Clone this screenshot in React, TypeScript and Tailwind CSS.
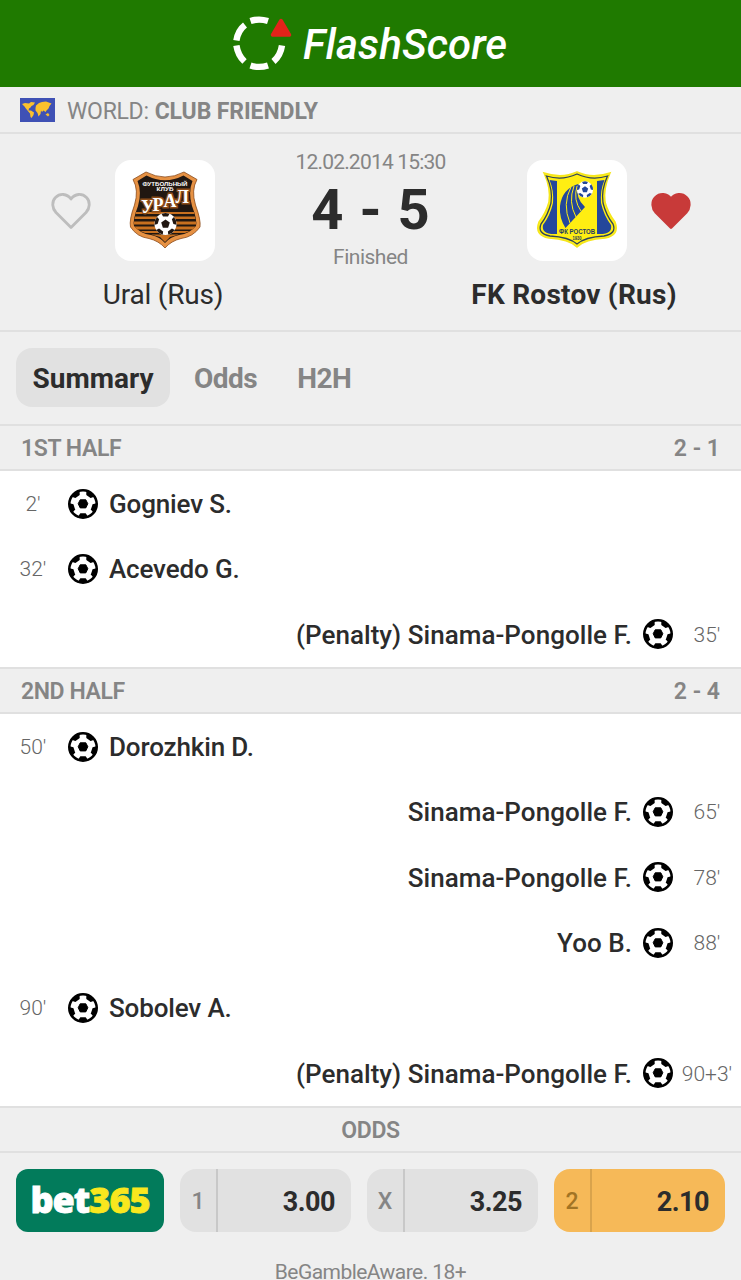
import type { ReactNode } from "react";

type Goal = {
  minute: string;
  player: string;
  side: "home" | "away";
};

const firstHalf: Goal[] = [
  { minute: "2'", player: "Gogniev S.", side: "home" },
  { minute: "32'", player: "Acevedo G.", side: "home" },
  { minute: "35'", player: "(Penalty) Sinama-Pongolle F.", side: "away" },
];

const secondHalf: Goal[] = [
  { minute: "50'", player: "Dorozhkin D.", side: "home" },
  { minute: "65'", player: "Sinama-Pongolle F.", side: "away" },
  { minute: "78'", player: "Sinama-Pongolle F.", side: "away" },
  { minute: "88'", player: "Yoo B.", side: "away" },
  { minute: "90'", player: "Sobolev A.", side: "home" },
  { minute: "90+3'", player: "(Penalty) Sinama-Pongolle F.", side: "away" },
];

const Logo = () => (
  <svg width="62" height="60" viewBox="0 0 62 60" className="shrink-0">
    <g fill="none" stroke="#fff" strokeWidth="6.4">
      <path d="M20.500 7Q29 4.200 38 7" />
      <path d="M15 11Q8 16.500 6.400 26.500" />
      <path d="M6.400 31.500Q8 41.500 14.500 47.500" />
      <path d="M20.500 51.500Q29 54.300 38 51.500" />
      <path d="M43.500 47.500Q50.500 41.500 52 31.500" />
    </g>
    <path d="M51 6.500L59.500 21H42.500Z" fill="#e2231a" stroke="#e2231a" strokeWidth="3.500" strokeLinejoin="round" />
  </svg>
);

const WorldFlag = () => (
  <svg width="35" height="24" viewBox="0 0 35 24" className="shrink-0">
    <path fill="#3f51b5" d="M0 0h35v24H0z" />
    <g fill="#fbc02d">
      <path d="M2 6L5 5 9 5.500 11 4 15 4.500 13.500 7 11.500 8 10.500 9.500 9 10.500 8.500 12.500 11 12.500 14 14.500 13.500 17 11.500 20 10.500 19 10 15.500 7.500 12.500 5.500 10 4.500 8.500Z" />
      <path d="M16 7.500L19 5 22 4 26 3.500 31.500 5.500 29.500 8 28.500 10.500 26.500 12.500 25.500 14 23.500 12.500 22 14 21 12.500 20.500 16 18.500 18.500 17.500 15 15.500 12.500 15.500 10Z" />
      <path d="M25.500 16.500L28 15 29.500 17 28 18.500Z" />
    </g>
  </svg>
);

const Ball = () => (
  <svg width="30" height="30" viewBox="-15 -15 30 30" className="shrink-0">
    <circle r="13.700" fill="#fff" stroke="#000" strokeWidth="2.600" />
    <path d="M-2.800-4.200H2.800L4.800-.3 2.800 3.900H-2.800L-4.800-.3Z" stroke="#000" strokeWidth="1" strokeLinejoin="round" />
    {[0, 72, 144, 216, 288].map((deg) => (
      <path key={deg} transform={`rotate(${deg})`} d="M-5.500 13.500L-3.200 10 -2.600 9.200H2.600L3.200 10 5.500 13.500Z" />
    ))}
  </svg>
);

const Heart = ({ active }: { active?: boolean }) => (
  <svg width="40" height="38" viewBox="0 0 40 38" className="shrink-0">
    <path
      d="M20 35.500L5 20.500C1 16 .5 9.500 4.500 5.500 9 1 16 1.500 20 7 24 1.500 31 1 35.500 5.500 39.500 9.500 39 16 35 20.500Z"
      fill={active ? "#c83a39" : "none"}
      stroke={active ? "#c83a39" : "#bdbdbd"}
      strokeWidth="2.800"
      strokeLinejoin="round"
    />
  </svg>
);

const CrestBall = ({ x, y, s, color }: { x: number; y: number; s: number; color: string }) => (
  <g transform={`translate(${x} ${y}) scale(${s})`}>
    <circle r="11" fill="#fff" />
    <g fill={color}>
      <path d="M0-4.500L4.300-1.400 2.600 3.700H-2.600L-4.300-1.400Z" />
      {[36, 108, 180, 252, 324].map((deg) => (
        <path key={deg} transform={`rotate(${deg})`} d="M-4 10.200L-2.500 7.500H2.500L4 10.200 0 11Z" />
      ))}
    </g>
  </g>
);

const UralCrest = () => (
  <svg width="100" height="101" viewBox="0 0 100 101">
    <path
      d="M31 12Q50 22 69 12L82 19.500Q76 30 80.500 45 86 60 85 67 78 77 66 78.500 56 81 50 88 44 81 34 78.500 22 77 15.500 67 14 60 19.500 45 24 30 18 19.500Z"
      fill="#e69143"
      stroke="#8a4a1b"
      strokeWidth="0.8"
    />
    <path
      d="M31.500 15.500Q50 25 68.500 15.500L77.500 21Q73 32 77 46 82.500 60 81 66 75 73.500 64 75 55 77 50 83 45 77 36 75 25 73.500 19 66 17.500 60 23 46 27 32 22.500 21Z"
      fill="#211711"
    />
    <path d="M21 52H79L79.500 54H20.500ZM20 56.500H80L80.500 59H19.500ZM19 61.500H81V64.500H19ZM19.500 66.500H80.500L78 69.500H22ZM25 71H75L70 73H30ZM36 74.500H64L55 77 50 82 45 77Z" fill="#c8701f" />
    <g fontFamily="Liberation Sans, sans-serif" fontWeight="700" fill="#fff" textAnchor="middle">
      <text x="50" y="26" fontSize="4.500" textLength="45" lengthAdjust="spacingAndGlyphs">ФУТБОЛЬНЫЙ</text>
      <text x="50" y="31.200" fontSize="4.500" textLength="17" lengthAdjust="spacingAndGlyphs">КЛУБ</text>
    </g>
    <text
      x="26 37.500 48.500 60.500"
      y="53 51 47 43"
      fontFamily="Liberation Serif, serif"
      fontWeight="700"
      fontSize="18"
      fill="#fff"
      stroke="#8c4c19"
      strokeWidth="3"
      paintOrder="stroke"
    >
      УРАЛ
    </text>
    <CrestBall x={50.5} y={64} s={1} color="#211711" />
  </svg>
);

const RostovCrest = () => (
  <svg width="100" height="101" viewBox="0 0 100 101">
    <path
      d="M17 13Q35 19 50 12 65 19 83 13 76 29 78 42 81 53 88 62 93 75 78 78 58 79 50 87 42 79 22 78 7 75 12 62 19 53 22 42 24 28 17 13Z"
      fill="#fff018"
      stroke="#f5e61c"
      strokeWidth="1.500"
    />
    <path
      d="M19.500 16Q35 21 50 14 65 21 80.500 16 74 30 76 43 79 55 86 64 90 73.500 77 76 58 77 50 84 42 77 23 76 10 73.500 14 64 21 55 24 43 26 30 19.500 16Z"
      fill="#ffee12"
      stroke="#30435b"
      strokeWidth="1.300"
    />
    <path d="M22.500 20L30 21V74Q14 75 16 65 23 56 26 43 27 30 22.500 20ZM77.500 20L70 21V74Q86 75 84 65 77 56 74 43 73 30 77.500 20Z" fill="#24479b" />
    <path d="M51 24Q35 29 33 46 32 58 38.500 68L58 47Q48 38 51 24Z" fill="#24479b" />
    <path d="M44 27Q35 44 43 63M47 26Q41 42 49 57M50 26Q46 40 54 51" fill="none" stroke="#ffee12" />
    <CrestBall x={58} y={29.5} s={0.74} color="#24479b" />
    <g fontFamily="Liberation Sans, sans-serif" fontWeight="700" fill="#263b61" textAnchor="middle">
      <text x="50" y="74" fontSize="6.500" textLength="36" lengthAdjust="spacingAndGlyphs">ФК РОСТОВ</text>
      <text x="50" y="79.800" fontSize="4.500" textLength="9" lengthAdjust="spacingAndGlyphs">1930</text>
    </g>
  </svg>
);

const Badge = ({ children }: { children: ReactNode }) => (
  <div className="h-[101px] w-[100px] overflow-hidden rounded-2xl bg-white">{children}</div>
);

const SectionHeader = ({ title, score }: { title: string; score: string }) => (
  <div className="flex h-[47px] shrink-0 items-center justify-between border-y-2 border-[#e0e0e0] bg-[#efefef] px-[21px] pt-[3px] text-[23px] font-semibold text-[#858585]">
    <span className="tracking-[-0.4px]">{title}</span>
    <span>{score}</span>
  </div>
);

const GoalRow = ({ goal }: { goal: Goal }) => {
  const home = goal.side === "home";
  return (
    <div className={home ? "flex min-h-0 flex-1 items-center" : "flex min-h-0 flex-1 flex-row-reverse items-center"}>
      <div className={home ? "w-[68px] pt-[2px] pr-[2px] text-center text-[21px] font-light text-[#666]" : "w-[68px] pt-[2px] text-center text-[21px] font-light text-[#666]"}>
        {goal.minute}
      </div>
      <Ball />
      <div className={home ? "px-[11px] pt-[2px] text-[26px] font-medium tracking-[-0.15px] whitespace-nowrap" : "px-[11px] pt-[2px] text-[26px] font-medium tracking-[0.04px] whitespace-nowrap"}>
        {goal.player}
      </div>
    </div>
  );
};

const Odd = ({ label, value, best }: { label: string; value: string; best?: boolean }) => (
  <div className={best ? "flex h-[63px] w-[171px] rounded-2xl bg-[#f6b958]" : "flex h-[63px] w-[171px] rounded-2xl bg-[#e1e1e1]"}>
    <div
      className={
        best
          ? "flex w-[38px] items-center justify-center border-r-2 border-[#d9a34c] pt-[3px] text-[23px] font-medium text-[#a27424]"
          : "flex w-[38px] items-center justify-center border-r-2 border-[#c8c8c8] pt-[3px] text-[23px] font-medium text-[#858585]"
      }
    >
      {label}
    </div>
    <div className="flex flex-1 items-center justify-end pt-[3px] pr-[16px] text-[27px] font-bold tracking-[-0.5px]">{value}</div>
  </div>
);

export default function App() {
  return (
    <div className="flex h-[1280px] w-[741px] flex-col overflow-hidden bg-[#efefef] font-[Roboto,sans-serif] text-[#2c2c2c]">
      <header className="flex h-[87px] shrink-0 items-center bg-[#1f7a00] pl-[230px]">
        <Logo />
        <span className="ml-[11px] pt-[2px] text-[42px] font-medium tracking-[0.1px] text-white italic">FlashScore</span>
      </header>

      <div className="flex h-[47px] shrink-0 items-center border-b-2 border-[#e0e0e0] pt-px pl-5 text-[23px] text-[#858585]">
        <WorldFlag />
        <span className="ml-3 pt-[4px] tracking-[-0.3px]">WORLD:</span>
        <span className="ml-[6px] pt-[4px] font-bold tracking-[-0.1px]">CLUB FRIENDLY</span>
      </div>

      <section className="flex h-[198px] shrink-0 justify-between border-b-2 border-[#e0e0e0] pt-[26px]">
        <div className="flex w-[280px] flex-col pl-[51px]">
          <div className="flex items-center gap-[24px]">
            <Heart />
            <Badge>
              <UralCrest />
            </Badge>
          </div>
          <div className="mt-[13px] w-[224px] text-center text-[28px] leading-[42px] tracking-[-0.2px]">Ural (Rus)</div>
        </div>
        <div className="flex flex-1 flex-col items-center text-[#858585]">
          <div className="-mt-[10px] text-[21px] leading-6 tracking-[-0.8px] whitespace-nowrap">12.02.2014 15:30</div>
          <div className="mt-[4px] flex text-[56px] leading-[64px] font-bold text-[#2c2c2c]">
            <span>4</span>
            <span className="mx-4">-</span>
            <span>5</span>
          </div>
          <div className="mt-[3px] text-[21px] leading-6 tracking-[-0.5px]">Finished</div>
        </div>
        <div className="flex w-[280px] flex-col items-end pr-[50px]">
          <div className="flex items-center gap-[24px]">
            <Badge>
              <RostovCrest />
            </Badge>
            <Heart active />
          </div>
          <div className="mt-[13px] w-[234px] text-center text-[28px] leading-[42px] font-bold tracking-[0.25px] whitespace-nowrap">FK Rostov (Rus)</div>
        </div>
      </section>

      <nav className="flex h-[91px] shrink-0 items-center px-4 text-[28px] font-bold text-[#858585]">
        <button className="h-[59px] w-[154px] rounded-2xl bg-[#e1e1e1] pt-[3px] text-[#2c2c2c]">Summary</button>
        <button className="ml-6 pt-[3px] tracking-[-0.5px]">Odds</button>
        <button className="ml-[40px] pt-[3px] tracking-[-0.5px]">H2H</button>
      </nav>

      <div className="flex h-[48px] shrink-0 flex-col justify-end bg-[#efefef]">
        <SectionHeader title="1ST HALF" score="2 - 1" />
      </div>
      <div className="flex h-[196px] shrink-0 flex-col bg-white">
        {firstHalf.map((goal, i) => (
          <GoalRow key={i} goal={goal} />
        ))}
      </div>
      <SectionHeader title="2ND HALF" score="2 - 4" />
      <div className="flex h-[392px] shrink-0 flex-col bg-white">
        {secondHalf.map((goal, i) => (
          <GoalRow key={i} goal={goal} />
        ))}
      </div>

      <div className="flex h-[47px] shrink-0 items-center justify-center border-y-2 border-[#e0e0e0] pt-[4px] text-[23px] font-semibold tracking-[-0.4px] text-[#858585]">ODDS</div>
      <div className="flex shrink-0 justify-between px-4 pt-4">
        <div className="flex h-[63px] w-[148px] items-center justify-center rounded-xl bg-[#027b5b] pb-px font-['Open_Sans',sans-serif] text-[36px] font-extrabold tracking-[-1px] text-white [-webkit-text-stroke:0.8px]">
          bet<span className="text-[#f9e71e]">365</span>
        </div>
        <Odd label="1" value="3.00" />
        <Odd label="X" value="3.25" />
        <Odd label="2" value="2.10" best />
      </div>
      <footer className="mt-[26px] shrink-0 text-center text-[21px] leading-[22px] tracking-[-0.55px] text-[#858585]">
        <p className="pt-[3px]">BeGambleAware. 18+</p>
      </footer>
    </div>
  );
}
